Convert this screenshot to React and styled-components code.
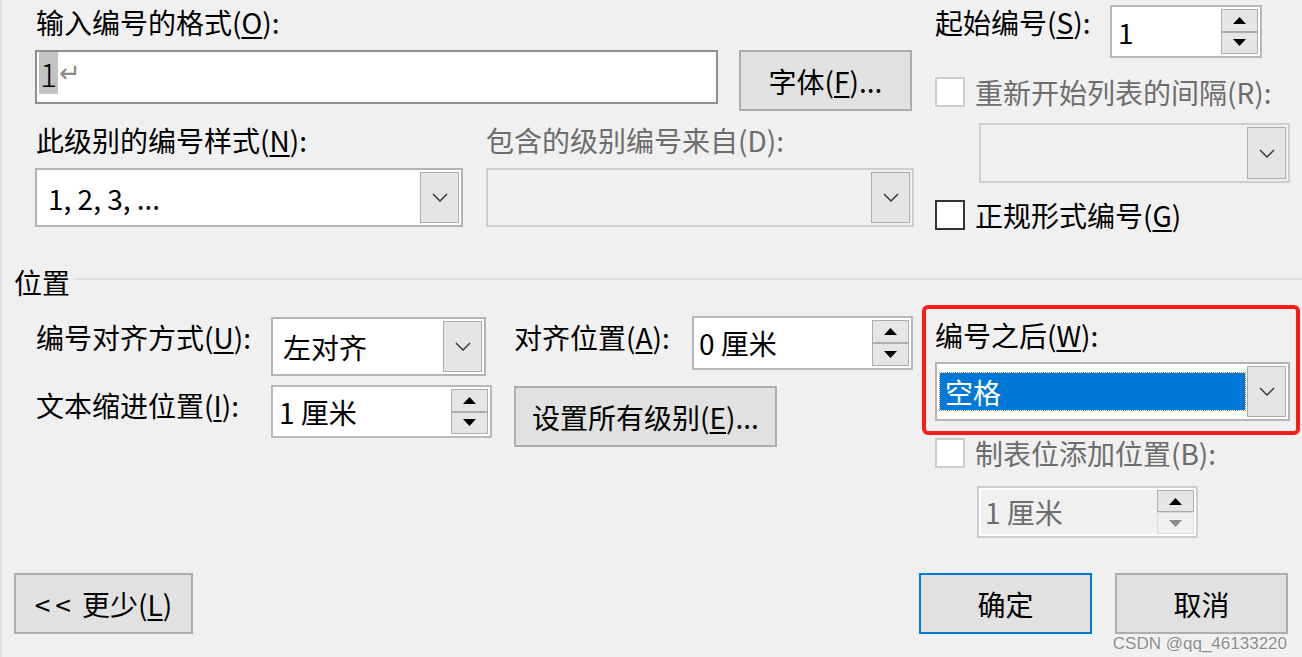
import React from 'react'
import styled, { createGlobalStyle } from 'styled-components'

const GlobalStyle = createGlobalStyle`
  html, body {
    margin: 0;
    padding: 0;
    background: #f0f0f0;
  }
  body {
    font-family: "Noto Sans CJK SC", "Microsoft YaHei", sans-serif;
  }
`

const Dialog = styled.div`
  position: relative;
  width: 1302px;
  height: 657px;
  overflow: hidden;
  background: #f0f0f0;
  box-shadow: inset 2px 0 0 #e2e2e2;
  display: flex;
  flex-direction: column;
  color: #000;
  font-size: 28px;
  line-height: 36px;
`

const Label = styled.div`
  color: ${props => (props.disabled ? '#6d6d6d' : '#000')};
  margin-left: ${props => props.indent || '0'};
  margin-top: ${props => props.top || '0'};
  width: ${props => props.width || 'auto'};
  white-space: nowrap;
  flex-shrink: 0;
  u {
    text-underline-offset: 3px;
    text-decoration-thickness: 2px;
  }
`

/* top part */

const Top = styled.div`
  display: flex;
  padding: 4px 0 0 35px;
`

const LeftBlock = styled.div`
  width: 879px;
  display: flex;
  flex-direction: column;
`

const FormatRow = styled.div`
  display: flex;
  align-items: flex-start;
  margin-top: 10px;
`

const TextField = styled.div`
  width: 683px;
  height: 54px;
  box-sizing: border-box;
  background: #fff;
  border: 2px solid #8f8f8f;
  padding: 0 2px;
  display: flex;
  align-items: flex-start;
`

const Highlight = styled.span`
  background: #c3c3c3;
  height: 42px;
  line-height: 42px;
  padding: 0 1px;
  font-size: 32px;
  font-weight: 300;
`

const ReturnMark = styled.span`
  color: #8a8a8a;
  font-size: 26px;
  line-height: 38px;
  margin-left: 1px;
`

const PairGrid = styled.div`
  display: grid;
  grid-template-columns: 451px 428px;
  row-gap: 10px;
  margin-top: 11px;
`

const RightBlock = styled.div`
  margin-left: 21px;
  display: flex;
  flex-direction: column;
`

const InlineRow = styled.div`
  display: flex;
  align-items: flex-start;
  margin-top: ${props => props.top || '0'};
`

const CheckRow = styled.div`
  display: flex;
  align-items: center;
  gap: 10px;
  height: 36px;
  margin-top: ${props => props.top || '0'};
  margin-left: ${props => props.indent || '0'};
`

const Box = styled.div`
  width: 30px;
  height: 30px;
  box-sizing: border-box;
  background: #fff;
  border: 2px solid ${props => (props.disabled ? '#cccccc' : '#333333')};
`

/* controls */

const Combo = styled.div`
  display: flex;
  width: ${props => props.w}px;
  height: ${props => props.h}px;
  box-sizing: border-box;
  background: ${props => (props.disabled ? '#f0f0f0' : '#fff')};
  border: 2px solid ${props => (props.disabled ? '#cfcfcf' : '#b4b4b4')};
  padding: 2px;
  margin-left: ${props => props.indent || '0'};
  margin-top: ${props => props.top || '0'};
  flex-shrink: 0;
`

const ComboText = styled.div`
  flex: 1;
  display: flex;
  align-items: center;
  padding-left: ${props => props.pad || '8px'};
`

const Selected = styled.div`
  flex: 1;
  margin: 7px 2px 7px 1px;
  background: #0078d7;
  color: #fff;
  outline: 1px dotted #c8843a;
  display: flex;
  align-items: center;
  padding-left: 5px;
`

const DropButton = styled.div`
  width: 39px;
  box-sizing: border-box;
  background: #e5e5e5;
  border: 1px solid #acacac;
  display: flex;
  align-items: center;
  justify-content: center;
`

const Spin = styled.div`
  display: flex;
  width: ${props => props.w}px;
  height: ${props => props.h}px;
  box-sizing: border-box;
  background: #fff;
  border: 2px solid ${props => (props.disabled ? '#cdcdcd' : '#b9b9b9')};
  padding: 2px;
  margin-left: ${props => props.indent || '0'};
  margin-top: ${props => props.top || '0'};
  flex-shrink: 0;
`

const SpinText = styled.div`
  flex: 1;
  display: flex;
  align-items: center;
  padding-left: ${props => props.pad || '6px'};
  background: ${props => (props.disabled ? '#f0f0f0' : '#fff')};
  color: ${props => (props.disabled ? '#6d6d6d' : '#000')};
`

const SpinButtons = styled.div`
  width: 37px;
  display: flex;
  flex-direction: column;
`

const SpinButton = styled.div`
  flex: 1;
  box-sizing: border-box;
  background: ${props => (props.faded ? '#f0f0f0' : '#e5e5e5')};
  border: 1px solid ${props => (props.faded ? '#dadada' : '#adadad')};
  display: flex;
  align-items: center;
  justify-content: center;
`

const Button = styled.div`
  width: ${props => props.w}px;
  height: 61px;
  box-sizing: border-box;
  background: #e1e1e1;
  border: 2px solid ${props => (props.primary ? '#0078d7' : '#adadad')};
  display: flex;
  align-items: center;
  justify-content: center;
  margin-left: ${props => props.indent || '0'};
  margin-top: ${props => props.top || '0'};
  flex-shrink: 0;
  u {
    text-underline-offset: 3px;
    text-decoration-thickness: 2px;
  }
`

const Arrows = styled.span`
  letter-spacing: 5px;
`

/* position section */

const SectionHead = styled.div`
  display: flex;
  align-items: center;
  padding-left: 14px;
  margin-top: 31px;
`

const Rule = styled.div`
  flex: 1;
  height: 2px;
  background: #dedede;
  margin: -6px 0 0 6px;
`

const PosArea = styled.div`
  display: flex;
  align-items: flex-start;
  margin-top: 5px;
`

const AlignGrid = styled.div`
  display: grid;
  grid-template-columns: 235px auto;
  row-gap: 9px;
  margin-left: 36px;
  padding-top: 12px;
  align-items: start;
`

const MidCol = styled.div`
  display: flex;
  flex-direction: column;
  margin-left: 22px;
  padding-top: 11px;
`

const RightCol = styled.div`
  display: flex;
  flex-direction: column;
  margin-left: 9px;
`

const RedBox = styled.div`
  width: 378px;
  height: 130px;
  box-sizing: border-box;
  border: 4px solid #ff1a1a;
  border-radius: 6px;
  padding: 8px 6px 0 9px;
`

const Footer = styled.div`
  margin-top: auto;
  display: flex;
  justify-content: space-between;
  padding: 0 14px 23px 14px;
`

const ButtonGroup = styled.div`
  display: flex;
  gap: 23px;
`

const Watermark = styled.div`
  position: absolute;
  right: 15px;
  bottom: 3px;
  font-family: "Liberation Sans", Arial, sans-serif;
  font-size: 17px;
  line-height: 20px;
  color: #8c8c8c;
  text-shadow: 0 0 2px #fff, 0 0 1px #fff;
`

const Chevron = () => (
  <svg width="16" height="9" viewBox="0 0 16 9">
    <path d="M1 1 L8 8 L15 1" fill="none" stroke="#3a3a3a" strokeWidth="1.5" />
  </svg>
)

const Tri = ({ down, color = '#000' }) => (
  <svg width="13" height="7" viewBox="0 0 13 7">
    <polygon points={down ? '0,0 13,0 6.5,7' : '0,7 13,7 6.5,0'} fill={color} />
  </svg>
)

const ComboBox = ({ w, h, disabled, pad, children, ...props }) => (
  <Combo w={w} h={h} disabled={disabled} {...props}>
    <ComboText pad={pad}>{children}</ComboText>
    <DropButton>
      <Chevron />
    </DropButton>
  </Combo>
)

const Spinner = ({ w, h, disabled, pad, children, ...props }) => (
  <Spin w={w} h={h} disabled={disabled} {...props}>
    <SpinText pad={pad} disabled={disabled}>{children}</SpinText>
    <SpinButtons>
      <SpinButton>
        <Tri />
      </SpinButton>
      <SpinButton faded={disabled}>
        <Tri down color={disabled ? '#8a8a8a' : '#000'} />
      </SpinButton>
    </SpinButtons>
  </Spin>
)

const Check = ({ disabled, children, ...props }) => (
  <CheckRow {...props}>
    <Box disabled={disabled} />
    <Label disabled={disabled}>{children}</Label>
  </CheckRow>
)

export default function App() {
  return (
    <Dialog>
      <GlobalStyle />
      <Top>
        <LeftBlock>
          <Label indent="1px">
            输入编号的格式(<u>O</u>):
          </Label>
          <FormatRow>
            <TextField>
              <Highlight>1</Highlight>
              <ReturnMark>↵</ReturnMark>
            </TextField>
            <Button w={173} indent="21px">
              字体(<u>F</u>)...
            </Button>
          </FormatRow>
          <PairGrid>
            <Label indent="1px">
              此级别的编号样式(<u>N</u>):
            </Label>
            <Label disabled>包含的级别编号来自(D):</Label>
            <ComboBox w={428} h={59} pad="9px">
              1, 2, 3, ...
            </ComboBox>
            <ComboBox w={428} h={59} disabled />
          </PairGrid>
        </LeftBlock>
        <RightBlock>
          <InlineRow top="1px">
            <Label width="175px" top="-1px">
              起始编号(<u>S</u>):
            </Label>
            <Spinner w={152} h={53} pad="4px">
              1
            </Spinner>
          </InlineRow>
          <Check disabled top="16px">
            重新开始列表的间隔(R):
          </Check>
          <ComboBox w={311} h={60} disabled indent="44px" top="13px" />
          <Check top="14px">
            正规形式编号(<u>G</u>)
          </Check>
        </RightBlock>
      </Top>

      <SectionHead>
        <Label>位置</Label>
        <Rule />
      </SectionHead>

      <PosArea>
        <AlignGrid>
          <Label top="2px">
            编号对齐方式(<u>U</u>):
          </Label>
          <ComboBox w={215} h={59} pad="8px">
            左对齐
          </ComboBox>
          <Label top="2px">
            文本缩进位置(<u>I</u>):
          </Label>
          <Spinner w={221} h={53} pad="4px">
            1 厘米
          </Spinner>
        </AlignGrid>

        <MidCol>
          <InlineRow>
            <Label width="178px" top="3px">
              对齐位置(<u>A</u>):
            </Label>
            <Spinner w={221} h={54} pad="3px">
              0 厘米
            </Spinner>
          </InlineRow>
          <Button w={263} top="16px">
            设置所有级别(<u>E</u>)...
          </Button>
        </MidCol>

        <RightCol>
          <RedBox>
            <Label>
              编号之后(<u>W</u>):
            </Label>
            <Combo w={355} h={59} top="9px">
              <Selected>空格</Selected>
              <DropButton>
                <Chevron />
              </DropButton>
            </Combo>
          </RedBox>
          <Check disabled indent="13px">
            制表位添加位置(B):
          </Check>
          <Spinner w={221} h={52} disabled indent="55px" top="15px" pad="4px">
            1 厘米
          </Spinner>
        </RightCol>
      </PosArea>

      <Footer>
        <Button w={179}>
          <Arrows>&lt;&lt;</Arrows>
          &nbsp;更少(<u>L</u>)
        </Button>
        <ButtonGroup>
          <Button w={173} primary>
            确定
          </Button>
          <Button w={173}>取消</Button>
        </ButtonGroup>
      </Footer>

      <Watermark>CSDN @qq_46133220</Watermark>
    </Dialog>
  )
}
